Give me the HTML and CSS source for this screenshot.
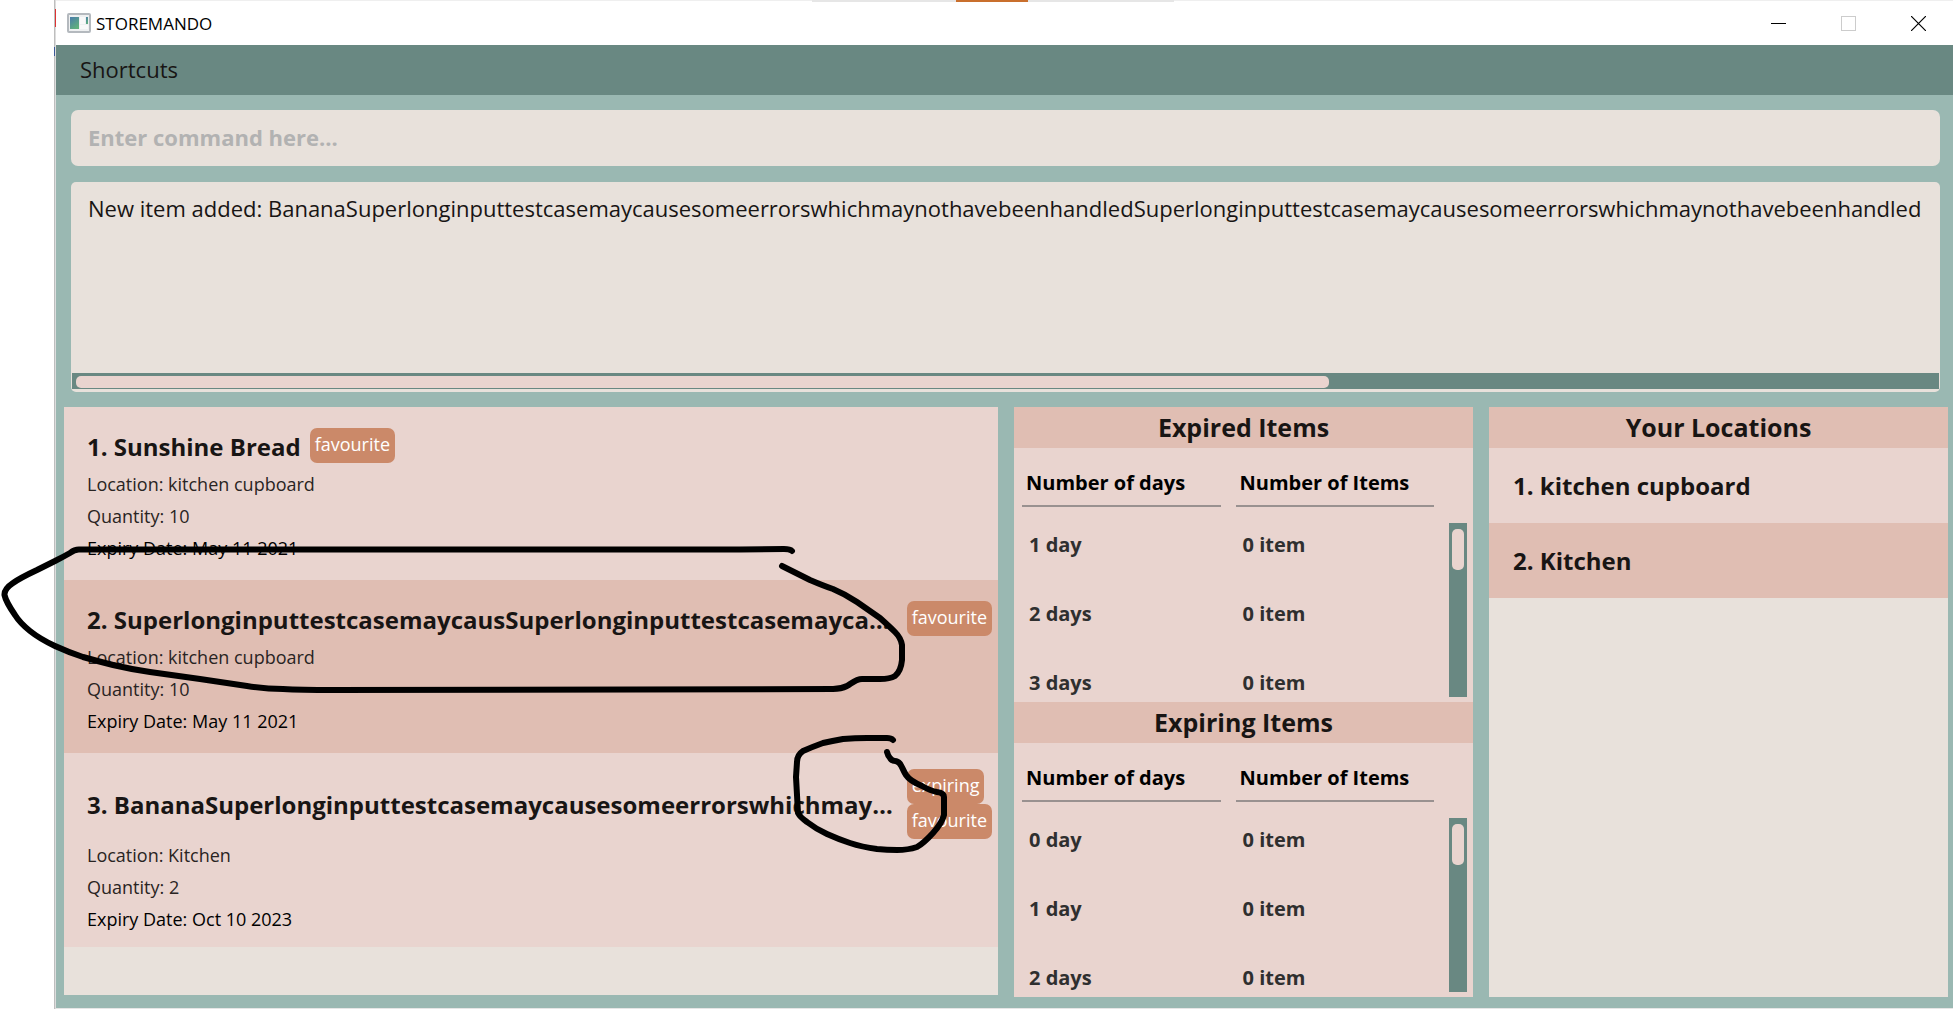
FILE: index.html
```html
<!DOCTYPE html>
<html lang="en">
<head>
<meta charset="utf-8">
<title>STOREMANDO</title>
<link rel="stylesheet" href="styles.css">
</head>
<body>
<div class="desktop">
  <div class="backdrop-tabs"></div>
  <div class="backdrop-edge"></div>
  <main class="window">
    <header class="titlebar">
      <svg class="app-icon" width="24" height="20" viewBox="0 0 24 20" aria-hidden="true">
        <defs><linearGradient id="pane" x1="0" y1="0" x2="0.6" y2="1"><stop offset="0" stop-color="#4a7cab"/><stop offset="1" stop-color="#5fb07c"/></linearGradient></defs>
        <rect x="1" y="1" width="22" height="18" rx="1" fill="#eef0f1" stroke="#b4b9be" stroke-width="2"/>
        <rect x="3" y="4" width="9" height="12" fill="url(#pane)"/>
        <rect x="13" y="4" width="5" height="7" fill="#f9f9f9"/>
        <rect x="13" y="12" width="8" height="4" fill="#f9f9f9"/>
        <rect x="19" y="4" width="2" height="7" fill="url(#pane)"/>
      </svg>
      <h1 class="app-name">STOREMANDO</h1>
      <div class="controls">
        <button class="control" aria-label="Minimize"><svg width="15" height="15" viewBox="0 0 15 15"><path d="M0 7.500H15" stroke="#000"/></svg></button>
        <button class="control" aria-label="Maximize" disabled><svg width="15" height="15" viewBox="0 0 15 15"><rect x=".5" y=".5" width="14" height="14" fill="none" stroke="#ccc"/></svg></button>
        <button class="control" aria-label="Close"><svg width="15" height="15" viewBox="0 0 15 15"><path d="M0 0L15 15M15 0L0 15" stroke="#000" stroke-width="1.200"/></svg></button>
      </div>
    </header>
    <nav class="menubar"><button class="menu">Shortcuts</button></nav>
    <input class="command" type="text" aria-label="Command" placeholder="Enter command here...">
    <section class="result">
      <textarea class="result-text" aria-label="Result" wrap="off" readonly>New item added: BananaSuperlonginputtestcasemaycausesomeerrorswhichmaynothavebeenhandledSuperlonginputtestcasemaycausesomeerrorswhichmaynothavebeenhandled</textarea>
      <div class="hbar"><div class="hthumb"></div></div>
    </section>
    <div class="panes">
      <ol class="items">
        <li class="item">
          <div class="item-head"><h2 class="item-name">1. Sunshine Bread</h2><div class="tags"><span class="tag">favourite</span></div></div>
          <p class="detail">Location: kitchen cupboard</p>
          <p class="detail">Quantity: 10</p>
          <p class="detail expiry">Expiry Date: May 11 2021</p>
        </li>
        <li class="item">
          <div class="item-head"><h2 class="item-name">2. SuperlonginputtestcasemaycausSuperlonginputtestcasemaycausesomeerrors</h2><div class="tags"><span class="tag">favourite</span></div></div>
          <p class="detail">Location: kitchen cupboard</p>
          <p class="detail">Quantity: 10</p>
          <p class="detail expiry">Expiry Date: May 11 2021</p>
        </li>
        <li class="item">
          <div class="item-head"><h2 class="item-name">3. BananaSuperlonginputtestcasemaycausesomeerrorswhichmaynothavebeenhandled</h2><div class="tags"><span class="tag">expiring</span><span class="tag">favourite</span></div></div>
          <p class="detail">Location: Kitchen</p>
          <p class="detail">Quantity: 2</p>
          <p class="detail expiry">Expiry Date: Oct 10 2023</p>
        </li>
      </ol>
      <div class="stats">
        <section class="stat">
          <h2 class="pane-title">Expired Items</h2>
          <div class="stat-body">
            <table class="days">
              <thead><tr><th><span class="col-name">Number of days</span></th><th><span class="col-name">Number of Items</span></th></tr></thead>
              <tbody>
                <tr><td>1 day</td><td>0 item</td></tr>
                <tr><td>2 days</td><td>0 item</td></tr>
                <tr><td>3 days</td><td>0 item</td></tr>
              </tbody>
            </table>
            <div class="vbar"><div class="vthumb"></div></div>
          </div>
        </section>
        <section class="stat">
          <h2 class="pane-title">Expiring Items</h2>
          <div class="stat-body">
            <table class="days">
              <thead><tr><th><span class="col-name">Number of days</span></th><th><span class="col-name">Number of Items</span></th></tr></thead>
              <tbody>
                <tr><td>0 day</td><td>0 item</td></tr>
                <tr><td>1 day</td><td>0 item</td></tr>
                <tr><td>2 days</td><td>0 item</td></tr>
              </tbody>
            </table>
            <div class="vbar"><div class="vthumb"></div></div>
          </div>
        </section>
      </div>
      <section class="locations">
        <h2 class="pane-title">Your Locations</h2>
        <ol class="location-list">
          <li class="location">1. kitchen cupboard</li>
          <li class="location">2. Kitchen</li>
        </ol>
      </section>
    </div>
  </main>
  <svg class="ink" width="960" height="860" viewBox="0 0 960 860" aria-hidden="true">
    <path d="M792 551Q790 549 784 549L740 549.500L80 549.500Q75 549 70 553Q63 557 55 561L37 570Q20 578 13 583Q4 589 4.500 595Q6 602 15 615Q20 623 30 631Q40 639 55 646Q68 652 83 657Q97 661 113 665Q130 669 150 672L200 679L247 686Q265 689 283 689Q300 690 333 690L833 689Q841 689 847 686C852 683 856 679 862 679L880 679Q890 679 895 676Q901 671 902 660L902 645Q901 638 895 632Q890 627 880 618Q870 611 857 602Q845 594 833 589Q824 586 810 580Q804 577 782 566"/>
    <path d="M893 740Q891 738 887 738L867 738Q855 738 843 739Q832 741 823 743Q812 747 803 751Q797 755 797 762L796 777L798 813Q800 817 807 822Q816 829 827 834Q838 839 850 843Q862 847 877 849Q887 850 897 850Q908 850 917 847Q924 843 933 833Q942 823 944 815L944 797Q944 793 937 792Q931 791 922 786Q910 781 906 775C902 769 901 761 895 761Q892 761 890 758Q888 756 887 752"/>
  </svg>
</div>
</body>
</html>
```
FILE: styles.css
```css
* { box-sizing: border-box; }

body {
  margin: 0;
  background: #fff;
  color: #181514;
  font-family: "Open Sans", "Noto Sans", sans-serif;
}

h1, h2, p, ol { margin: 0; padding: 0; font-size: inherit; }
ol { list-style: none; }
button { border: 0; background: none; font: inherit; color: inherit; padding: 0; }

.desktop {
  position: relative;
  display: grid;
  grid-template-columns: 54px 2px minmax(0, 1fr);
  grid-template-rows: 1px minmax(0, 1fr) 1px;
  height: 100vh;
  background: linear-gradient(#e6e6e6, #e6e6e6) 56px 100% / 100% 1px no-repeat;
}

.backdrop-tabs {
  grid-area: 1 / 3;
  z-index: 1;
  height: 2px;
  background:
    linear-gradient(#c96f2d, #c96f2d) 900px 0 / 72px 2px no-repeat,
    linear-gradient(#e6e6e6, #e6e6e6) 756px 0 / 362px 2px no-repeat,
    linear-gradient(#efefef, #efefef) 0 0 / 100% 1px no-repeat;
}

.backdrop-edge {
  grid-area: 1 / 2 / 4 / 3;
  background:
    linear-gradient(#d33, #d33) 1px 9px / 1px 18px no-repeat,
    linear-gradient(#3b5998, #3b5998) 0 47px / 1px 9px no-repeat,
    linear-gradient(90deg, #bebebe 50%, #ddd 50%);
}

.window {
  grid-area: 2 / 3;
  display: flex;
  flex-direction: column;
  min-height: 0;
  background: #9ab8b2;
}

.titlebar {
  display: flex;
  align-items: center;
  height: 44px;
  padding-left: 11px;
  background: #fff;
  color: #000;
}
.app-icon { margin-right: 5px; }
.app-name { font-size: 17px; font-weight: 400; }
.controls { display: flex; margin-left: auto; }
.control { width: 70px; height: 44px; display: grid; place-items: center; }

.menubar { background: #698882; }
.menu { height: 50px; padding: 0 24px 2px; font-size: 22px; }

.command {
  height: 56px;
  margin: 15px 13px 16px 15px;
  padding: 0 17px 2px;
  border: 0;
  border-radius: 7px;
  background: #e8e1db;
  font: 700 22px/32px "Open Sans", "Noto Sans", sans-serif;
}
.command::placeholder { color: #b2b2b2; opacity: 1; }

.result {
  display: flex;
  flex-direction: column;
  height: 210px;
  margin: 0 13px 15px 15px;
  padding: 0 1px 3px;
  border-radius: 5px;
  background: #e8e1db;
}
.result-text {
  flex: 1;
  padding: 10px 0 0 16px;
  border: 0;
  resize: none;
  overflow: hidden;
  background: none;
  color: #181514;
  font: 400 22px/32px "Open Sans", "Noto Sans", sans-serif;
}
.hbar { height: 16px; padding: 3px 4px 1px; background: #698882; }
.hthumb { width: 67.4%; height: 12px; border-radius: 5px; background: #e9d4cf; }

.panes {
  flex: 1;
  display: grid;
  grid-template-columns: 934fr 459fr 459fr;
  gap: 16px;
  min-height: 0;
  padding: 0 5px 11px 8px;
}

.items { margin-bottom: 2px; background: #e8e1db; overflow: hidden; }
.item { min-height: 173px; padding: 16px 6px 12px 23px; background: #e9d4cf; }
.item:nth-child(even) { background: #e0beb3; }
.item-head { display: flex; align-items: center; gap: 9px; min-height: 45px; }
.item-name {
  overflow: hidden;
  padding-top: 2px;
  white-space: nowrap;
  text-overflow: ellipsis;
  font-size: 24px;
  line-height: 34px;
}
.tags { display: flex; flex-direction: column; align-items: flex-start; }
.tag {
  height: 35px;
  padding: 0 5px;
  border-radius: 7px;
  background: #cb8969;
  color: #fff;
  font-size: 18px;
  line-height: 33px;
}
.detail { font-size: 18px; line-height: 32px; color: #292423; }
.expiry { color: #000; }

.stats { display: flex; flex-direction: column; min-height: 0; background: #e9d4cf; }
.stat { flex: 1 1 0; display: flex; flex-direction: column; min-height: 0; }
.pane-title {
  height: 41px;
  background: #e0beb3;
  text-align: center;
  font-size: 25px;
  line-height: 40px;
}
.stat-body { flex: 1; display: flex; align-items: stretch; min-height: 0; overflow: hidden; padding: 0 6px 0 8px; }
.days { flex: 1; width: 100%; min-width: 0; align-self: flex-start; table-layout: fixed; border-collapse: collapse; font-weight: 700; font-size: 20px; color: #2f2f2f; }
.days th { height: 62px; padding: 0; text-align: left; vertical-align: top; color: #000; }
.col-name { display: block; height: 59px; margin-right: 15px; padding: 20px 0 0 4px; line-height: 30px; border-bottom: 2px solid #999190; }
.days td { height: 69px; padding: 0 7px; }
.vbar { flex: none; width: 18px; margin: 75px 0 5px; padding: 6px 3px; background: #698882; }
.vthumb { height: 41px; border-radius: 5px; background: #e9d4cf; }

.locations { background: #e8e1db; }
.location { height: 75px; padding-left: 24px; background: #e9d4cf; font-weight: 700; font-size: 24px; line-height: 75px; }
.location:nth-child(even) { background: #e0beb3; }

.ink { position: absolute; left: 0; top: 0; z-index: 2; pointer-events: none; fill: none; stroke: #000; stroke-width: 6; stroke-linecap: round; stroke-linejoin: round; }
```
